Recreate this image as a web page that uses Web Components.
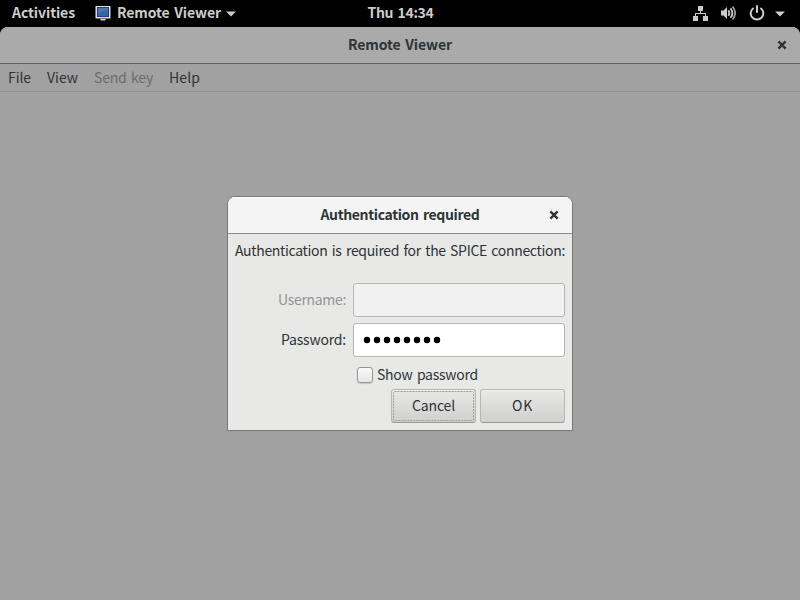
<!DOCTYPE html>
<html lang="en"><head><meta charset="utf-8"><title>Remote Viewer</title>
<style>
html,body{margin:0;width:800px;height:600px;overflow:hidden;background:#000}
body{font:14px/20px "Noto Sans CJK SC","Noto Sans",sans-serif;color:#2e3436;word-spacing:1.5px}
</style></head><body>
<desktop-screen></desktop-screen>
<script>
const define=(name,html,setup)=>customElements.define(name,class extends HTMLElement{
  connectedCallback(){
    if(this.shadowRoot)return;
    const t=document.createElement('template');t.innerHTML=html;
    this.attachShadow({mode:'open'}).append(t.content.cloneNode(true));
    if(setup)setup(this,this.shadowRoot);
  }
});
// A label whose tracking adapts to its "width" attribute.
define('fit-label','<style>:host{display:block;white-space:pre;flex:none;height:20px;margin-bottom:3px}span{display:inline-block}</style><span><slot></slot></span>',(el,root)=>{
  const w=+el.getAttribute('width'),s=root.querySelector('span'),n=el.textContent.length;
  const natural=s.getBoundingClientRect().width;
  s.style.letterSpacing=((w-natural)/n)+'px';
  el.style.width=w+'px';
});
define('display-icon','<style>:host{display:block;width:16px;height:16px}svg{display:block}</style><svg width="16" height="16"><rect x=".5" y="1" width="15" height="12.500" rx=".6" fill="#deded8"/><rect x="2.500" y="2.500" width="11" height="9" fill="#3465a4" stroke="#2b3990"/><path d="M3 9V3h10v2q-5 0-10 4z" fill="#6689b5" opacity=".55"/><path d="M5 14h6l-1 1.500H6z" fill="#d6d6d2"/></svg>');
define('caret-icon','<style>:host{display:block}svg{display:block}</style><svg width="10" height="6"><path d="M0 .5h10L5 5.500z" fill="#ccc"/></svg>');
define('network-icon','<style>:host{display:block}svg{display:block}</style><svg width="16" height="16"><path d="M6 1h5v5H6zM1 11h5v5H1zM11 11h5v5h-5zM8 6h1v2h5v3h-1V9H4v2H3V8h5z" fill="#ccc"/></svg>');
define('volume-icon','<style>:host{display:block}svg{display:block}</style><svg width="16" height="16"><path d="M1 5.500h2.500L7 2v12l-3.500-3.500H1z" fill="#ccc"/><g fill="none" stroke="#ccc" stroke-width="1.800"><path d="M8.300 5.200q2.200 2.800 0 5.600"/><path d="M10.500 3.200q3.800 4.800 0 9.600"/><path d="M12.600 1.500q5 6.500 0 13" stroke="#999"/></g></svg>');
define('power-icon','<style>:host{display:block}svg{display:block}</style><svg width="16" height="16" fill="none" stroke="#ccc" stroke-width="2"><path d="M4.600 3a6.300 6.300 0 1 0 6.800 0"/><path d="M8 1v6" stroke-linecap="round"/></svg>');
define('close-icon','<style>:host{display:block}svg{display:block}</style><svg width="10" height="10"><path d="M1.400 1.400l7.200 7.200m0-7.200l-7.200 7.200" stroke="#2e3436" stroke-width="2.400"/></svg>');
define('top-bar',`<style>:host{display:flex;height:27px;background:#000;color:#ccc;font-weight:700;box-sizing:border-box}
.l,.c,.r{display:flex;align-items:center;height:26px;flex:1}.l{padding-left:12px}.c{flex:none;padding-left:4px}.r{justify-content:flex-end;padding-right:15px}
display-icon{margin:0 6px 0 20px}.l caret-icon{margin:1px 0 0 5px}.r caret-icon{margin-top:1px}network-icon{margin-right:12px}volume-icon{margin-right:13px}power-icon{margin-right:10px}
</style><div class="l"><fit-label width="63">Activities</fit-label><display-icon></display-icon><fit-label width="104">Remote Viewer</fit-label><caret-icon></caret-icon></div><div class="c"><fit-label width="66">Thu 14:34</fit-label></div><div class="r"><network-icon></network-icon><volume-icon></volume-icon><power-icon></power-icon><caret-icon></caret-icon></div>`);
define('title-bar',`<style>:host{display:grid;grid-template-columns:1fr auto 1fr;align-items:center;height:36px;box-sizing:border-box;font-weight:700}close-icon{justify-self:end;margin-right:13px}</style><span></span><slot></slot><close-icon></close-icon>`);
define('menu-bar',`<style>:host{display:flex;gap:16px;height:27px;align-items:center;padding-left:8px;border-bottom:1px solid #919190}fit-label{margin-bottom:1px}.off{color:#6b6d6d}</style><fit-label width="23">File</fit-label><fit-label width="31">View</fit-label><fit-label class="off" width="59">Send key</fit-label><fit-label width="31">Help</fit-label>`);
define('text-entry',`<style>:host{display:flex;align-items:center;width:212px;height:34px;box-sizing:border-box;border:1px solid #b6b6b3;border-radius:3px;background:#fff;padding-left:8px}:host([disabled]){background:#f1f1f1}svg{display:block}</style>`,(el,root)=>{
  const n=+el.getAttribute('count');
  if(!n)return;
  const t=document.createElement('template');
  t.innerHTML=`<svg width="${n*10}" height="10">${Array.from({length:n},(_,k)=>`<circle cx="${k*10+5}" cy="5" r="3.200"/>`).join('')}</svg>`;
  root.append(t.content.cloneNode(true));
});
define('check-box','<style>:host{display:block;width:16px;height:16px;box-sizing:border-box;border:1px solid #989893;border-radius:3px;background:linear-gradient(#fafafa,#e6e6e4);box-shadow:0 1px 1px #c5c5c2}</style>');
define('push-button',`<style>:host{display:flex;align-items:center;justify-content:center;position:relative;width:85px;height:34px;box-sizing:border-box;border:1px solid #b6b6b3;border-bottom-color:#999995;border-radius:3px;background:linear-gradient(#e8e8e7,#d0d0ce);box-shadow:inset 0 1px #f0f0ef}svg{display:none;position:absolute;inset:1px}:host([focused]) svg{display:block}</style><svg width="81" height="30"><rect x=".5" y=".5" width="80" height="29" rx="1" fill="none" stroke="#9b9d9b" stroke-dasharray="2 1"/></svg><slot></slot>`);
define('auth-dialog',`<style>:host{display:block;width:346px;height:235px;box-sizing:border-box;border:1px solid #797977;border-radius:8px 8px 0 0;background:#e8e8e7;overflow:hidden}
title-bar{background:#f4f4f4;border-bottom:1px solid #8b8b84;height:37px;box-shadow:inset 0 1px #fff}
.msg{display:flex;height:27px;padding-left:7px;align-items:flex-end}.form{display:grid;grid-template-columns:118px 212px;column-gap:7px;row-gap:6px;align-items:center;margin-top:22px}.msg fit-label{margin-bottom:1px}.form fit-label{justify-self:end}.off{color:#929595}
.check{display:flex;align-items:center;gap:4px;padding-left:129px;height:20px;margin-top:8px}.actions{display:flex;justify-content:flex-end;gap:4px;padding-right:7px;margin-top:4px}
</style><title-bar><fit-label width="159">Authentication required</fit-label></title-bar><div class="msg"><fit-label width="330">Authentication is required for the SPICE connection:</fit-label></div><div class="form"><fit-label class="off" width="68">Username:</fit-label><text-entry disabled></text-entry><fit-label width="65">Password:</fit-label><text-entry count="8"></text-entry></div><div class="check"><check-box></check-box><fit-label width="101">Show password</fit-label></div><div class="actions"><push-button focused><fit-label width="43">Cancel</fit-label></push-button><push-button><fit-label width="21">OK</fit-label></push-button></div>`);
define('viewer-window',`<style>:host{display:block;height:573px;background:#a1a1a1;border-radius:8px 8px 0 0;overflow:hidden}title-bar{background:#aaa;border-bottom:1px solid #62625d;height:37px}</style><title-bar><fit-label width="104">Remote Viewer</fit-label></title-bar><menu-bar></menu-bar>`);
define('desktop-screen',`<style>:host{display:block;width:800px;height:600px;position:relative}auth-dialog{position:absolute;left:227px;top:196px}</style><top-bar></top-bar><viewer-window></viewer-window><auth-dialog></auth-dialog>`);
</script></body></html>
